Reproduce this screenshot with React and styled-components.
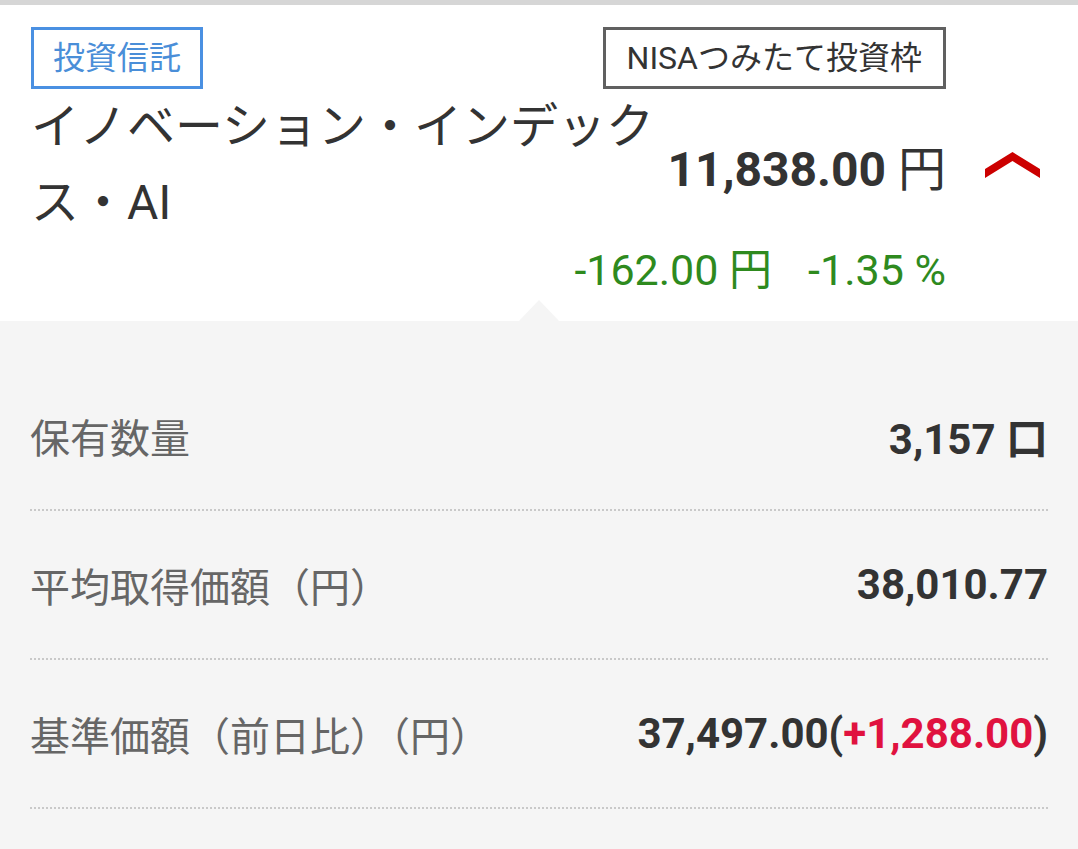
import React from "react";
import styled, { createGlobalStyle } from "styled-components";

const GlobalStyle = createGlobalStyle`
  html, body {
    margin: 0;
    padding: 0;
    background: #f5f5f5;
  }
  body {
    font-family: Roboto, "Noto Sans CJK JP", sans-serif;
    color: #333;
  }
  #root {
    min-height: 849px;
  }
`;

const Page = styled.div`
  display: flex;
  flex-direction: column;
  min-height: 849px;
  background: #f5f5f5;
`;

const TopBar = styled.div`
  height: 5px;
  background: #d6d6d6;
`;

const Header = styled.header`
  background: #fff;
  padding: 22px 38px 26px 31px;
  display: flex;
  flex-direction: column;
`;

const TagRow = styled.div`
  display: flex;
  justify-content: space-between;
  align-items: center;
  margin-right: 94px;
`;

const Tag = styled.span`
  box-sizing: border-box;
  height: 62px;
  display: inline-flex;
  align-items: center;
  padding: 0 ${(p) => (p.$blue ? 19 : 21)}px;
  border: ${(p) => (p.$blue ? "3px solid #4a90e2" : "3px solid #606060")};
  color: ${(p) => (p.$blue ? "#4a8ed8" : "#333")};
  font-size: 32px;
  line-height: 1;
  white-space: nowrap;
`;

const MainRow = styled.div`
  display: flex;
  align-items: center;
`;

const Title = styled.h1`
  flex: 1;
  min-width: 0;
  margin: 0;
  font-size: 48px;
  font-weight: 400;
  line-height: 76px;
  color: #333;
`;

const Price = styled.div`
  flex: none;
  font-size: 48px;
  color: #333;
  white-space: nowrap;
`;

const Strong = styled.span`
  font-weight: 700;
`;

const ChevronBox = styled.div`
  flex: none;
  width: 55px;
  margin-left: 39px;
  display: flex;
  align-items: center;
  justify-content: center;
`;

const ChangeRow = styled.div`
  display: flex;
  justify-content: flex-end;
  gap: 36px;
  margin-right: 94px;
  margin-top: 4px;
  font-size: 43px;
  line-height: 50px;
  color: #2e8a1e;
`;

const Details = styled.section`
  position: relative;
  flex: 1;
  background: #f5f5f5;
  padding: 41px 30px 0 30px;

  &::before {
    content: "";
    position: absolute;
    top: -21px;
    left: 50%;
    transform: translateX(-50%);
    border-left: 20px solid transparent;
    border-right: 20px solid transparent;
    border-bottom: 21px solid #f5f5f5;
  }
`;

const Row = styled.div`
  box-sizing: border-box;
  height: 149px;
  display: flex;
  align-items: center;
  justify-content: space-between;
  border-bottom: 2px dotted #c9c9c9;
`;

const Label = styled.span`
  font-size: 40px;
  color: #666;
`;

const Value = styled.span`
  font-size: 42px;
  font-weight: 700;
  color: #333;
  white-space: nowrap;
`;

const Plus = styled.span`
  color: #e0123f;
`;

const Chevron = () => (
  <svg width="55" height="28" viewBox="0 0 55 28" aria-hidden="true">
    <polygon points="0,18 27.5,1 55,18 55,27 27.5,10 0,27" fill="#cc0000" />
  </svg>
);

const rows = [
  { label: "保有数量", value: <>3,157 口</> },
  { label: "平均取得価額（円）", value: <>38,010.77</> },
  {
    label: "基準価額（前日比）（円）",
    value: (
      <>
        37,497.00(<Plus>+1,288.00</Plus>)
      </>
    ),
  },
];

export default function App() {
  return (
    <Page>
      <GlobalStyle />
      <TopBar />
      <Header>
        <TagRow>
          <Tag $blue>投資信託</Tag>
          <Tag>NISAつみたて投資枠</Tag>
        </TagRow>
        <MainRow>
          <Title>イノベーション・インデックス・AI</Title>
          <Price>
            <Strong>11,838.00</Strong> 円
          </Price>
          <ChevronBox>
            <Chevron />
          </ChevronBox>
        </MainRow>
        <ChangeRow>
          <span>-162.00 円</span>
          <span>-1.35 %</span>
        </ChangeRow>
      </Header>
      <Details>
        {rows.map((r) => (
          <Row key={r.label}>
            <Label>{r.label}</Label>
            <Value>{r.value}</Value>
          </Row>
        ))}
      </Details>
    </Page>
  );
}
